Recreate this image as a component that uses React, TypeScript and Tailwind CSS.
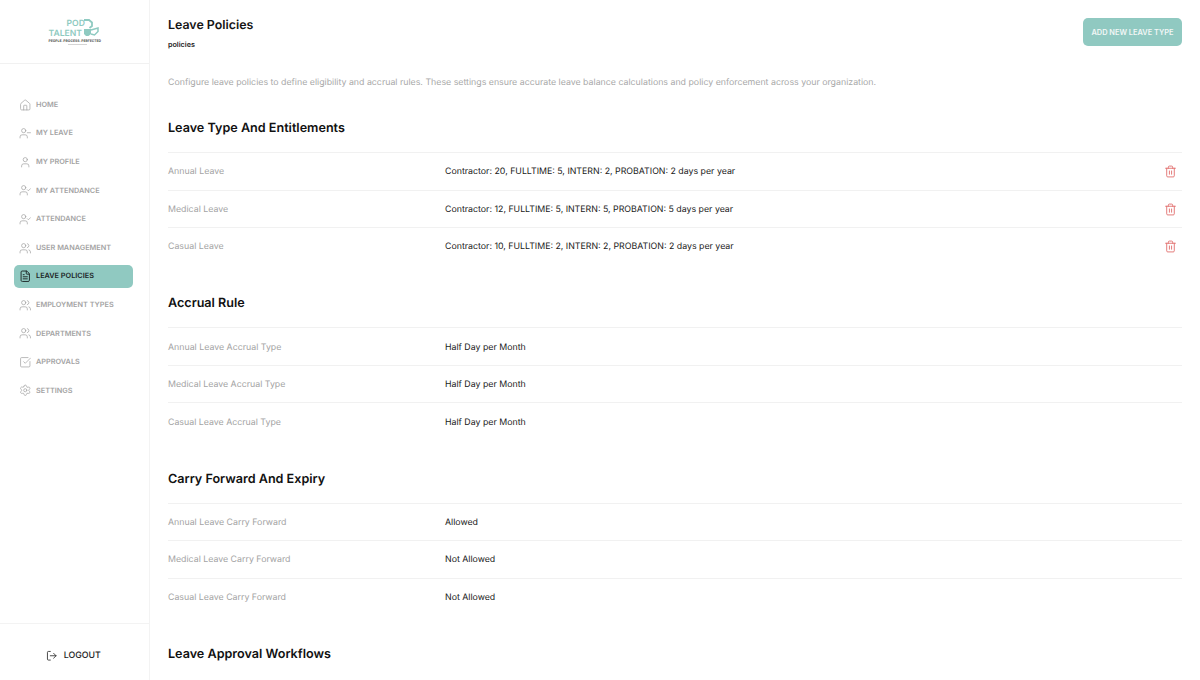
import { FileText, Home, LogOut, Settings, SquareCheckBig, Trash2, User, UserCheck, UserMinus, Users } from "lucide-react";

const NAV = [
  { label: "HOME", icon: Home },
  { label: "MY LEAVE", icon: UserMinus },
  { label: "MY PROFILE", icon: User },
  { label: "MY ATTENDANCE", icon: UserCheck },
  { label: "ATTENDANCE", icon: UserCheck },
  { label: "USER MANAGEMENT", icon: Users },
  { label: "LEAVE POLICIES", icon: FileText, active: true },
  { label: "EMPLOYMENT TYPES", icon: Users },
  { label: "DEPARTMENTS", icon: Users },
  { label: "APPROVALS", icon: SquareCheckBig },
  { label: "SETTINGS", icon: Settings },
];

const SECTIONS = [
  {
    title: "Leave Type And Entitlements",
    deletable: true,
    rows: [
      ["Annual Leave", "Contractor: 20, FULLTIME: 5, INTERN: 2, PROBATION: 2 days per year"],
      ["Medical Leave", "Contractor: 12, FULLTIME: 5, INTERN: 5, PROBATION: 5 days per year"],
      ["Casual Leave", "Contractor: 10, FULLTIME: 2, INTERN: 2, PROBATION: 2 days per year"],
    ],
  },
  {
    title: "Accrual Rule",
    rows: [
      ["Annual Leave Accrual Type", "Half Day per Month"],
      ["Medical Leave Accrual Type", "Half Day per Month"],
      ["Casual Leave Accrual Type", "Half Day per Month"],
    ],
  },
  {
    title: "Carry Forward And Expiry",
    rows: [
      ["Annual Leave Carry Forward", "Allowed"],
      ["Medical Leave Carry Forward", "Not Allowed"],
      ["Casual Leave Carry Forward", "Not Allowed"],
    ],
  },
  { title: "Leave Approval Workflows", rows: [] },
];

function Logo() {
  return (
    <div className="relative h-[27px] w-[52px] text-[#8fcac1]">
      <span className="absolute left-[18px] top-0 text-[8.6px] font-semibold leading-[10px]">POD</span>
      <span className="absolute left-0 top-[9.5px] text-[8.6px] font-semibold leading-[10px]">TALENT</span>
      {/* hexagon mark next to the wordmark */}
      <svg viewBox="0 0 16 18" className="absolute left-[34.5px] top-0 h-[18px] w-[16px]" fill="none" stroke="currentColor">
        <path d="M1 1h5l3 2.5V7L6.5 9" strokeWidth="1.8" />
        <path d="M1 10h7v5l-2.5 2H3l-2-2z" fill="currentColor" strokeWidth="0" />
        <path d="M8 11l7-2v3.5L11.5 16 8 15" strokeWidth="1.5" />
      </svg>
      <span className="absolute left-0 top-[19.5px] whitespace-nowrap text-[3.4px] font-bold leading-[4px] text-[#555]">PEOPLE. PROCESS. PERFECTED</span>
      <svg viewBox="0 0 19 1" className="absolute left-[19px] top-[24.5px] h-[1px] w-[19px]">
        <rect width="19" height="1" fill="#d5d5d5" />
      </svg>
    </div>
  );
}

function Sidebar() {
  return (
    <aside className="flex h-[680px] w-[150px] shrink-0 flex-col border-r border-[#f3f3f3]">
      <div className="flex h-[64px] items-center justify-center border-b border-[#f1f1f1] pt-[2px]">
        <Logo />
      </div>
      <nav className="flex flex-1 flex-col gap-[5.6px] pl-[13.5px] pr-[16px] pt-[29.3px]">
        {NAV.map((item) => {
          const Icon = item.icon;
          return (
            <div
              key={item.label}
              className={
                item.active
                  ? "flex h-[23px] items-center gap-[5px] rounded-[5px] bg-[#90c9c1] pl-[5px] text-[7.3px] font-semibold text-[#1c2526]"
                  : "flex h-[23px] items-center gap-[5px] rounded-[5px] pl-[5px] text-[7.3px] font-semibold text-[#a3a3a3]"
              }
            >
              <Icon className="h-[12.5px] w-[12.5px] shrink-0" strokeWidth={item.active ? 1.8 : 1.4} />
              <span className="whitespace-nowrap pt-[1px]">{item.label}</span>
            </div>
          );
        })}
      </nav>
      <div className="flex h-[57px] items-center justify-center gap-[6px] border-t border-[#f3f3f3] pt-[8px] pr-[2px] text-[8.8px] font-medium text-[#222]">
        <LogOut className="h-[11.5px] w-[11.5px]" strokeWidth={1.7} />
        LOGOUT
      </div>
    </aside>
  );
}

export default function App() {
  return (
    <div className="flex h-[680px] w-[1200px] overflow-hidden bg-white font-['Inter',sans-serif] [text-rendering:geometricPrecision]">
      <Sidebar />
      <main className="min-w-0 flex-1 overflow-hidden pl-[18px] pr-[18px]">
        <header className="flex items-start justify-between pt-[16px]">
          <div>
            <h1 className="text-[12.4px] font-semibold leading-[17px] text-[#151515]">Leave Policies</h1>
            <p className="mt-[7px] text-[7.2px] font-semibold leading-[10px] text-[#222]">policies</p>
          </div>
          <button type="button" className="mt-[2px] h-[28px] w-[99px] rounded-[5px] bg-[#90c9c1] pt-[1px] text-[7.4px] font-semibold text-[#f2f7f6]">
            ADD NEW LEAVE TYPE
          </button>
        </header>
        <p className="mb-[0.8px] mt-[27.4px] text-[8.8px] leading-[12px] text-[#a8a8a8]">
          Configure leave policies to define eligibility and accrual rules. These settings ensure accurate leave balance calculations and policy enforcement across your organization.
        </p>
        {SECTIONS.map((section) => (
          <section key={section.title} className="mt-[31.8px]">
            <h2 className="text-[12.6px] font-semibold leading-[16px] text-[#111]">{section.title}</h2>
            <div className="mt-[15px]">
              {section.rows.map(([label, value]) => (
                <div key={label} className="flex h-[37.5px] items-center border-t border-[#f1f1f1] pt-[1px] text-[8.8px]">
                  <span className="w-[277px] shrink-0 text-[#a3a3a3]">{label}</span>
                  <span className="flex-1 text-[#1a1a1a]">{value}</span>
                  {section.deletable && <Trash2 className="mr-[5px] h-[13px] w-[13px] text-[#e2706f]" strokeWidth={1.7} />}
                </div>
              ))}
            </div>
          </section>
        ))}
      </main>
    </div>
  );
}
